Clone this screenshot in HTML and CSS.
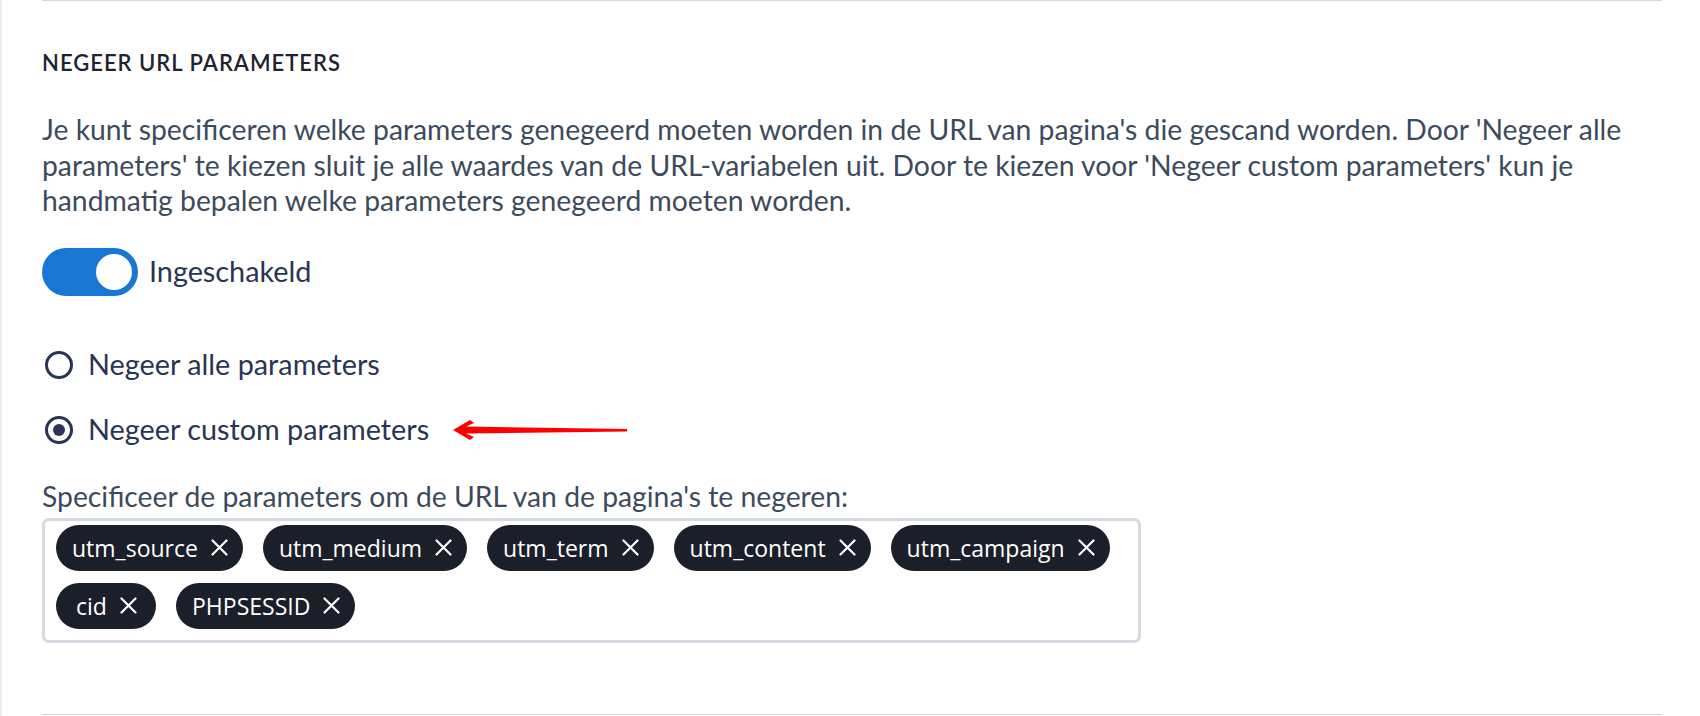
FILE: index.html
```html
<!DOCTYPE html>
<html lang="nl">
<head>
<meta charset="utf-8">
<title>Negeer URL parameters</title>
<link rel="stylesheet" href="styles.css">
</head>
<body>
<div class="page">
  <section class="section">
    <h2 class="title">Negeer URL parameters</h2>
    <p class="desc">Je kunt specificeren welke parameters genegeerd moeten worden in de URL van pagina's die gescand worden. Door 'Negeer alle parameters' te kiezen sluit je alle waardes van de URL-variabelen uit. Door te kiezen voor 'Negeer custom parameters' kun je handmatig bepalen welke parameters genegeerd moeten worden.</p>

    <div class="toggle-row">
      <span class="switch"><span class="knob"></span></span>
      <span class="toggle-label">Ingeschakeld</span>
    </div>

    <div class="radios">
      <div class="radio"><span class="radio-dot"></span><span class="radio-label">Negeer alle parameters</span></div>
      <div class="radio checked"><span class="radio-dot"></span><span class="radio-label">Negeer custom parameters</span>
        <svg class="annot-arrow" width="180" height="24" viewBox="0 0 180 24" aria-hidden="true">
          <polygon fill="#ff0000" points="2,12 19,2 23,5 15,8.5 176,11 176,13.5 15,15.5 23,19 19,22"/>
        </svg>
      </div>
    </div>

    <div class="field-label">Specificeer de parameters om de URL van de pagina's te negeren:</div>
    <div class="tags">
      <span class="tag">utm_source<svg class="x" viewBox="0 0 17 17"><path d="M1.5 1.5L15.5 15.5M15.5 1.5L1.5 15.5"/></svg></span>
      <span class="tag">utm_medium<svg class="x" viewBox="0 0 17 17"><path d="M1.5 1.5L15.5 15.5M15.5 1.5L1.5 15.5"/></svg></span>
      <span class="tag">utm_term<svg class="x" viewBox="0 0 17 17"><path d="M1.5 1.5L15.5 15.5M15.5 1.5L1.5 15.5"/></svg></span>
      <span class="tag">utm_content<svg class="x" viewBox="0 0 17 17"><path d="M1.5 1.5L15.5 15.5M15.5 1.5L1.5 15.5"/></svg></span>
      <span class="tag">utm_campaign<svg class="x" viewBox="0 0 17 17"><path d="M1.5 1.5L15.5 15.5M15.5 1.5L1.5 15.5"/></svg></span>
      <span class="tag">cid<svg class="x" viewBox="0 0 17 17"><path d="M1.5 1.5L15.5 15.5M15.5 1.5L1.5 15.5"/></svg></span>
      <span class="tag">PHPSESSID<svg class="x" viewBox="0 0 17 17"><path d="M1.5 1.5L15.5 15.5M15.5 1.5L1.5 15.5"/></svg></span>
    </div>
  </section>
</div>
</body>
</html>
```

FILE: styles.css
```css
* { box-sizing: border-box; }

html, body {
  margin: 0;
  padding: 0;
  background: #ffffff;
}

body {
  font-family: Lato, "Noto Sans", "Liberation Sans", sans-serif;
  color: #3c4b5c;
}

.page {
  height: 716px;
  border-left: 2px solid #eeeeee;
  padding: 0 38px 0 40px;
  overflow: hidden;
}

.section {
  height: 715px;
  border-top: 1px solid #d4d8e0;
  border-bottom: 1px solid #d4d8e0;
  padding-top: 49px;
}

.title {
  margin: 0;
  font-size: 22px;
  line-height: 26px;
  font-weight: 600;
  letter-spacing: 1px;
  text-transform: uppercase;
  color: #1e2330;
}

.desc {
  margin: 36px 0 0;
  font-size: 28.3px;
  line-height: 35.5px;
  color: #3c4b5c;
}

.toggle-row {
  margin-top: 29px;
  display: flex;
  align-items: center;
  gap: 11px;
}

.switch {
  width: 96px;
  height: 48px;
  border-radius: 24px;
  background: #1976d2;
  display: flex;
  align-items: center;
  justify-content: flex-end;
  padding-right: 6px;
}

.knob {
  width: 36px;
  height: 36px;
  border-radius: 50%;
  background: #ffffff;
}

.toggle-label {
  font-size: 28.8px;
  line-height: 35px;
  color: #2a3454;
}

.radios {
  margin-top: 51px;
  display: flex;
  flex-direction: column;
  gap: 29px;
}

.radio {
  position: relative;
  display: flex;
  align-items: center;
  gap: 15px;
  height: 36px;
}

.radio-dot {
  margin-left: 3px;
  width: 28px;
  height: 28px;
  border-radius: 50%;
  border: 3px solid #2a3454;
  display: flex;
  align-items: center;
  justify-content: center;
}

.radio.checked .radio-dot::after {
  content: "";
  width: 12px;
  height: 12px;
  border-radius: 50%;
  background: #2a3454;
}

.radio-label {
  font-size: 28.8px;
  line-height: 35px;
  color: #2a3454;
}

.annot-arrow {
  position: absolute;
  left: 409px;
  top: 6px;
}

.field-label {
  margin-top: 31px;
  font-size: 28.3px;
  line-height: 35px;
  color: #3c4b5c;
}

.tags {
  margin-top: 4px;
  width: 1099px;
  border: 3px solid #d5dae2;
  border-radius: 7px;
  padding: 4px 11px 11px;
  display: flex;
  flex-wrap: wrap;
  column-gap: 20px;
  row-gap: 12px;
}

.tag {
  display: inline-flex;
  align-items: center;
  justify-content: center;
  gap: 13px;
  min-width: 100px;
  height: 46px;
  padding: 0 15px 0 16px;
  border-radius: 23px;
  background: #1b1f2a;
  color: #ffffff;
  font-family: "Open Sans", "Noto Sans", sans-serif;
  font-size: 23px;
}

.x {
  width: 17px;
  height: 17px;
  stroke: #ffffff;
  stroke-width: 2.2;
  stroke-linecap: round;
  fill: none;
}
```
